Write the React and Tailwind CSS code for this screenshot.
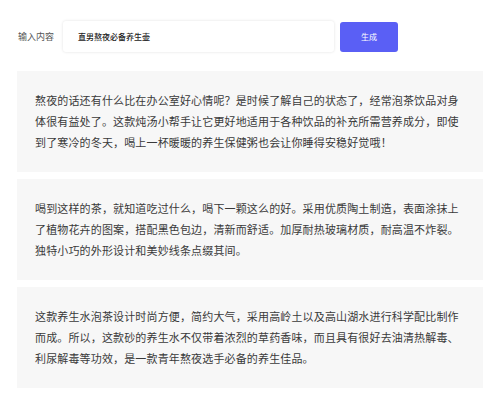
const results = [
  "熬夜的话还有什么比在办公室好心情呢？是时候了解自己的状态了，经常泡茶饮品对身体很有益处了。这款炖汤小帮手让它更好地适用于各种饮品的补充所需营养成分，即使到了寒冷的冬天，喝上一杯暖暖的养生保健粥也会让你睡得安稳好觉哦！",
  "喝到这样的茶，就知道吃过什么，喝下一颗这么的好。采用优质陶土制造，表面涂抹上了植物花卉的图案，搭配黑色包边，清新而舒适。加厚耐热玻璃材质，耐高温不炸裂。独特小巧的外形设计和美妙线条点缀其间。",
  "这款养生水泡茶设计时尚方便，简约大气，采用高岭土以及高山湖水进行科学配比制作而成。所以，这款砂的养生水不仅带着浓烈的草药香味，而且具有很好去油清热解毒、利尿解毒等功效，是一款青年熬夜选手必备的养生佳品。",
];

export default function App() {
  return (
    <div className="h-[401px] w-[500px] bg-white font-['Noto_Sans_CJK_SC',sans-serif] text-[#333]">
      <div className="flex items-center pl-[18px] pt-[21px]">
        <span className="w-[45px] text-[9px] text-[#555]">输入内容</span>
        <div className="flex h-[31px] w-[271px] items-center rounded-[3px] bg-white pl-[15px] text-[8px] font-medium text-[#222] shadow-[0_0_3px_rgba(0,0,0,0.12)]">
          直男熬夜必备养生壶
        </div>
        <button type="button" className="ml-[6px] flex h-[30px] w-[58px] items-center justify-center rounded-[3px] bg-[#5a5ff5] text-[8px] text-white">
          生成
        </button>
      </div>
      <div className="mt-[19px] flex flex-col gap-[7px] px-[17px]">
        {results.map((text) => (
          <div key={text.slice(0, 6)} className="h-[101px] bg-[#f7f7f7] px-[18px] pt-[19px] text-[11px] leading-[21px] tracking-[0.15px] text-[#3a3a3a]">
            {text}
          </div>
        ))}
      </div>
    </div>
  );
}
